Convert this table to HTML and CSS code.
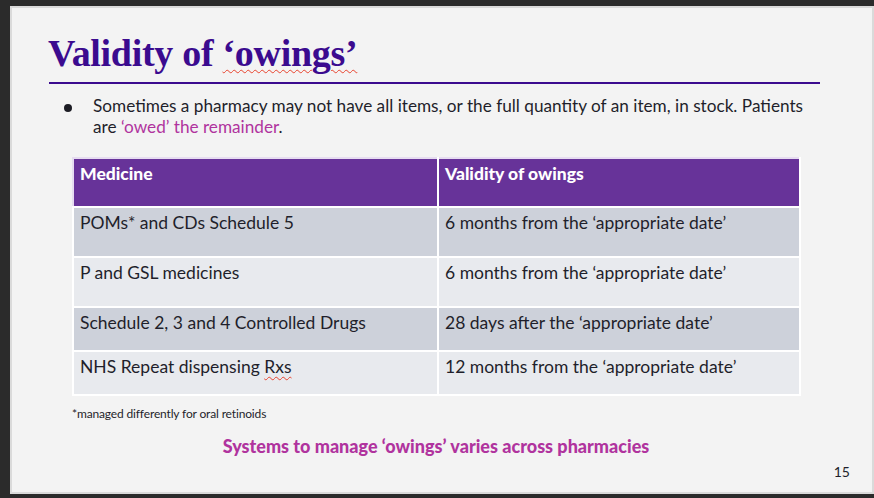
FILE: index.html
```html
<!DOCTYPE html>
<html>
<head>
<meta charset="utf-8">
<link rel="stylesheet" href="styles.css">
</head>
<body>
<div class="frame">
  <div class="slide">
    <h1 class="title">Validity of <span class="spell">‘owings’</span></h1>
    <div class="rule"></div>
    <div class="bullet">
      <span class="dot"></span>
      <p class="bullet-text">
        <span class="line">Sometimes a pharmacy may not have all items, or the full quantity of an item, in stock. Patients</span>
        <span class="line">are <span class="accent">‘owed’ the remainder</span>.</span>
      </p>
    </div>
    <table class="owings">
      <thead>
        <tr><th>Medicine</th><th>Validity of owings</th></tr>
      </thead>
      <tbody>
        <tr class="odd tall"><td>POMs* and CDs Schedule 5</td><td>6 months from the ‘appropriate date’</td></tr>
        <tr class="even tall"><td>P and GSL medicines</td><td>6 months from the ‘appropriate date’</td></tr>
        <tr class="odd"><td>Schedule 2, 3 and 4 Controlled Drugs</td><td>28 days after the ‘appropriate date’</td></tr>
        <tr class="even"><td>NHS Repeat dispensing <span class="spell">Rxs</span></td><td>12 months from the ‘appropriate date’</td></tr>
      </tbody>
    </table>
    <p class="footnote">*managed differently for oral retinoids</p>
    <p class="summary">Systems to manage ‘owings’ varies across pharmacies</p>
    <div class="page-num">15</div>
  </div>
</div>
</body>
</html>
```
FILE: styles.css
```css
* { box-sizing: border-box; }
html, body { margin: 0; padding: 0; }
body {
  background: #2b2b2b;
  width: 874px;
  height: 498px;
  overflow: hidden;
  font-family: "Lato", "Noto Sans", sans-serif;
}
.frame {
  padding: 6px 0 0 10px;
}
.slide {
  width: 864px;
  height: 488px;
  background: #f3f3f3;
  border: 2px solid #dadada;
  padding: 0 0 0 36px;
  display: flex;
  flex-direction: column;
  position: relative;
}
.title {
  margin: 23px 0 0 0;
  font-family: "Liberation Serif", "DejaVu Serif", serif;
  font-weight: bold;
  font-size: 38px;
  line-height: 44px;
  color: #3b0b8f;
  letter-spacing: -0.3px;
}
.spell {
  text-decoration: underline wavy #e8432e;
  text-decoration-thickness: 1px;
  text-underline-offset: 3px;
}
.rule {
  margin-top: 7px;
  width: 771px;
  height: 2px;
  background: #3b0b8f;
  margin-left: 1px;
}
.bullet {
  display: flex;
  margin-top: 11px;
  margin-left: 16px;
}
.dot {
  width: 8px;
  height: 8px;
  border-radius: 50%;
  background: #1c1c24;
  margin-top: 9px;
  flex: none;
}
.bullet-text {
  margin: 0 0 0 21px;
  width: 720px;
  font-size: 17.2px;
  line-height: 21px;
  color: #1f1f2b;
}
.line { display: block; white-space: nowrap; }
.accent { color: #b0339e; }
.owings {
  margin-top: 20px;
  margin-left: 24px;
  width: 729px;
  border-collapse: collapse;
  table-layout: fixed;
}
.owings th, .owings td {
  border: 2px solid #ffffff;
  text-align: left;
  vertical-align: top;
  padding: 3px 6px 0 6px;
  font-size: 17.5px;
  line-height: 24px;
  color: #1f1f2b;
}
.owings th:first-child, .owings td:first-child { width: 365px; }
.owings th {
  background: #673399;
  color: #ffffff;
  font-weight: 900;
  height: 49px;
  border-top-color: #e6dcf0;
  border-left-color: #e6dcf0;
}
.owings tr.tall td { height: 50px; }
.owings td { height: 44px; }
.owings tr.odd td { background: #cdd1da; }
.owings tr.even td { background: #e8eaee; }
.footnote {
  margin: 10px 0 0 24px;
  font-size: 12px;
  letter-spacing: -0.15px;
  color: #1f1f2b;
}
.summary {
  margin: 14px 0 0 0;
  width: 776px;
  text-align: center;
  font-weight: 900;
  font-size: 18px;
  color: #b0339e;
}
.page-num {
  position: absolute;
  right: 22px;
  bottom: 12px;
  font-size: 14px;
  color: #1f1f2b;
}
```
